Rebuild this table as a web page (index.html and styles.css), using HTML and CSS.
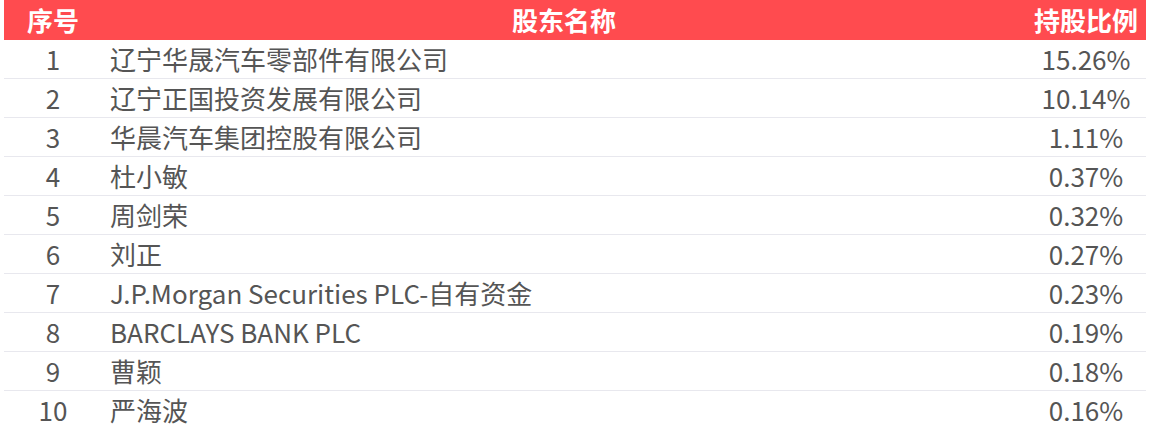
FILE: index.html
```html
<!DOCTYPE html>
<html lang="zh-CN">
<head>
<meta charset="utf-8">
<link rel="stylesheet" href="styles.css">
</head>
<body>
<table class="holders">
  <thead>
    <tr><th class="c-no">序号</th><th class="c-name">股东名称</th><th class="c-pct">持股比例</th></tr>
  </thead>
  <tbody>
    <tr><td class="c-no">1</td><td class="c-name">辽宁华晟汽车零部件有限公司</td><td class="c-pct">15.26%</td></tr>
    <tr><td class="c-no">2</td><td class="c-name">辽宁正国投资发展有限公司</td><td class="c-pct">10.14%</td></tr>
    <tr><td class="c-no">3</td><td class="c-name">华晨汽车集团控股有限公司</td><td class="c-pct">1.11%</td></tr>
    <tr><td class="c-no">4</td><td class="c-name">杜小敏</td><td class="c-pct">0.37%</td></tr>
    <tr><td class="c-no">5</td><td class="c-name">周剑荣</td><td class="c-pct">0.32%</td></tr>
    <tr><td class="c-no">6</td><td class="c-name">刘正</td><td class="c-pct">0.27%</td></tr>
    <tr><td class="c-no">7</td><td class="c-name">J.P.Morgan Securities PLC-自有资金</td><td class="c-pct">0.23%</td></tr>
    <tr><td class="c-no">8</td><td class="c-name">BARCLAYS BANK PLC</td><td class="c-pct">0.19%</td></tr>
    <tr><td class="c-no">9</td><td class="c-name">曹颖</td><td class="c-pct">0.18%</td></tr>
    <tr><td class="c-no">10</td><td class="c-name">严海波</td><td class="c-pct">0.16%</td></tr>
  </tbody>
</table>
</body>
</html>
```

FILE: styles.css
```css
html, body {
  margin: 0;
  padding: 0;
  background: #ffffff;
}
body {
  padding: 0 4px;
  font-family: "Noto Sans CJK SC", "Noto Sans", sans-serif;
}
.holders {
  width: 100%;
  border-collapse: collapse;
  table-layout: fixed;
  font-size: 26px;
  color: #555555;
}
.holders th {
  background: #ff4b4f;
  color: #ffffff;
  font-weight: bold;
  height: 40px;
  padding: 0;
  line-height: 40px;
}
.holders td {
  height: 38px;
  padding: 0;
  line-height: 38px;
  border-bottom: 1px solid #e8e8ee;
}
.holders tbody tr:last-child td {
  border-bottom: none;
}
.c-no {
  width: 98px;
  text-align: center;
}
.c-name {
  text-align: center;
}
td.c-name {
  text-align: left;
  padding-left: 8px !important;
}
.c-pct {
  width: 120px;
  text-align: center;
}
```
